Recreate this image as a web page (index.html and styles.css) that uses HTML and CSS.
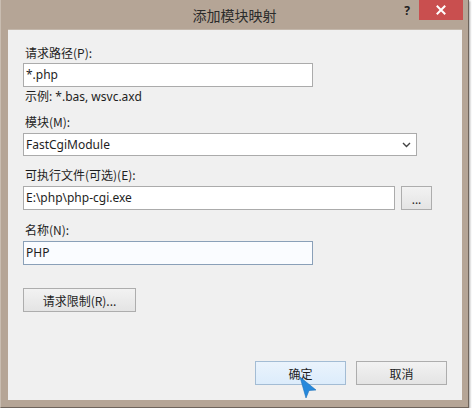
FILE: index.html
```html
<!DOCTYPE html>
<html lang="zh-CN">
<head>
<meta charset="utf-8">
<title>添加模块映射</title>
<link rel="stylesheet" href="styles.css">
</head>
<body>
<div class="window">
  <div class="titlebar">
    <div class="title">添加模块映射</div>
    <div class="controls">
      <span class="help">?</span>
      <span class="close">
        <svg width="10" height="10" viewBox="0 0 10 10"><path d="M1.5 1.5 L8.5 8.5 M8.5 1.5 L1.5 8.5" stroke="#fff" stroke-width="2" stroke-linecap="square"/></svg>
      </span>
    </div>
  </div>
  <div class="content">
    <div class="label">请求路径(P):</div>
    <div class="field w290">*.php</div>
    <div class="hint">示例: *.bas, wsvc.axd</div>

    <div class="label mt9">模块(M):</div>
    <div class="field select">
      <span>FastCgiModule</span>
      <svg class="chev" width="9" height="6" viewBox="0 0 9 6"><path d="M1 1 L4.5 4.5 L8 1" fill="none" stroke="#444" stroke-width="1.4"/></svg>
    </div>

    <div class="label mt11">可执行文件(可选)(E):</div>
    <div class="row">
      <div class="field w372">E:\php\php-cgi.exe</div>
      <div class="btn dots">...</div>
    </div>

    <div class="label mt12">名称(N):</div>
    <div class="field w290 focus">PHP</div>

    <div class="btn limit">请求限制(R)...</div>

    <div class="footer">
      <div class="btn wide hover">确定</div>
      <div class="btn wide">取消</div>
    </div>
    <svg class="cursor" width="20" height="24" viewBox="0 0 20 24"><path d="M1 1 L17 14 L10 14.5 L7 22 Z" fill="#2588dc" stroke="#1a6fb8" stroke-width="0.6"/></svg>
  </div>
</div>
</body>
</html>
```
FILE: styles.css
```css
html, body {
  margin: 0;
  padding: 0;
  background: #ffffff;
}
body {
  font-family: "Noto Sans", "Noto Sans CJK SC", sans-serif;
  font-size: 12px;
  color: #1e1e1e;
}
.window {
  width: 469px;
  height: 408px;
  box-sizing: border-box;
  background: #b5a596;
  border-left: 1px solid #c9bdb1;
  border-right: 1px solid #6e645b;
  border-bottom: 1px solid #6e645b;
  box-shadow: 1px 1px 2px rgba(0,0,0,0.35);
  display: flex;
  flex-direction: column;
  padding: 0 6px 7px 7px;
  position: relative;
}
.titlebar {
  height: 30px;
  position: relative;
  box-sizing: border-box;
  border-bottom: 1px solid #c3b7ab;
}
.title {
  text-align: center;
  font-family: "Noto Sans CJK SC", sans-serif;
  font-size: 14px;
  line-height: 30px;
  color: #2b2b2b;
  margin-left: -7px;
  margin-right: -6px;
}
.controls {
  position: absolute;
  top: 0;
  right: -1px;
  display: flex;
  align-items: flex-start;
}
.help {
  font-family: "Noto Sans", sans-serif;
  font-weight: bold;
  font-size: 12px;
  color: #222;
  line-height: 22px;
  margin-right: 9px;
}
.close {
  width: 44px;
  height: 20px;
  background: #c94f4f;
  display: flex;
  align-items: center;
  justify-content: center;
}
.content {
  flex: 1;
  background: #f0f0f0;
  display: flex;
  flex-direction: column;
  padding: 15px 15px 15px 15px;
  position: relative;
}
.label {
  font-family: "Noto Sans CJK SC", sans-serif;
  line-height: 16px;
  padding-left: 2px;
  margin-bottom: 2px;
}
.mt9 { margin-top: 9px; }
.mt11 { margin-top: 11px; margin-bottom: 3px; }
.mt12 { margin-top: 12px; margin-bottom: 3px; }
.hint {
  font-family: "Noto Sans", "Noto Sans CJK SC", sans-serif;
  line-height: 16px;
  padding-left: 2px;
  margin-top: 2px;
}
.field {
  height: 24px;
  box-sizing: border-box;
  border: 1px solid #ababab;
  background: #fff;
  padding-left: 2px;
  line-height: 22px;
  white-space: nowrap;
}
.w290 { width: 290px; }
.w372 { width: 372px; height: 24px; }
.select {
  width: 394px;
  height: 23px;
  line-height: 21px;
  margin-top: 1px;
  display: flex;
  align-items: center;
  justify-content: space-between;
  padding-right: 5px;
}
.chev { margin-top: 1px; }
.focus {
  border-color: #8aa0b8;
  background: #fafcff;
}
.row {
  display: flex;
  gap: 6px;
}
.btn {
  height: 24px;
  box-sizing: border-box;
  border: 1px solid #adadad;
  background: linear-gradient(#f2f2f2, #e4e4e4);
  display: flex;
  align-items: center;
  justify-content: center;
  font-family: "Noto Sans CJK SC", sans-serif;
}
.dots {
  width: 31px;
  font-family: "Noto Sans", sans-serif;
  line-height: 1;
  padding-top: 3px;
}
.limit {
  width: 113px;
  margin-top: 23px;
}
.footer {
  margin-top: auto;
  display: flex;
  justify-content: flex-end;
  gap: 10px;
}
.wide { width: 91px; }
.hover {
  border-color: #a3bcd4;
  background: linear-gradient(#eaf3fc, #dcecfb);
}
.cursor {
  position: absolute;
  left: 291px;
  top: 346px;
}
```
